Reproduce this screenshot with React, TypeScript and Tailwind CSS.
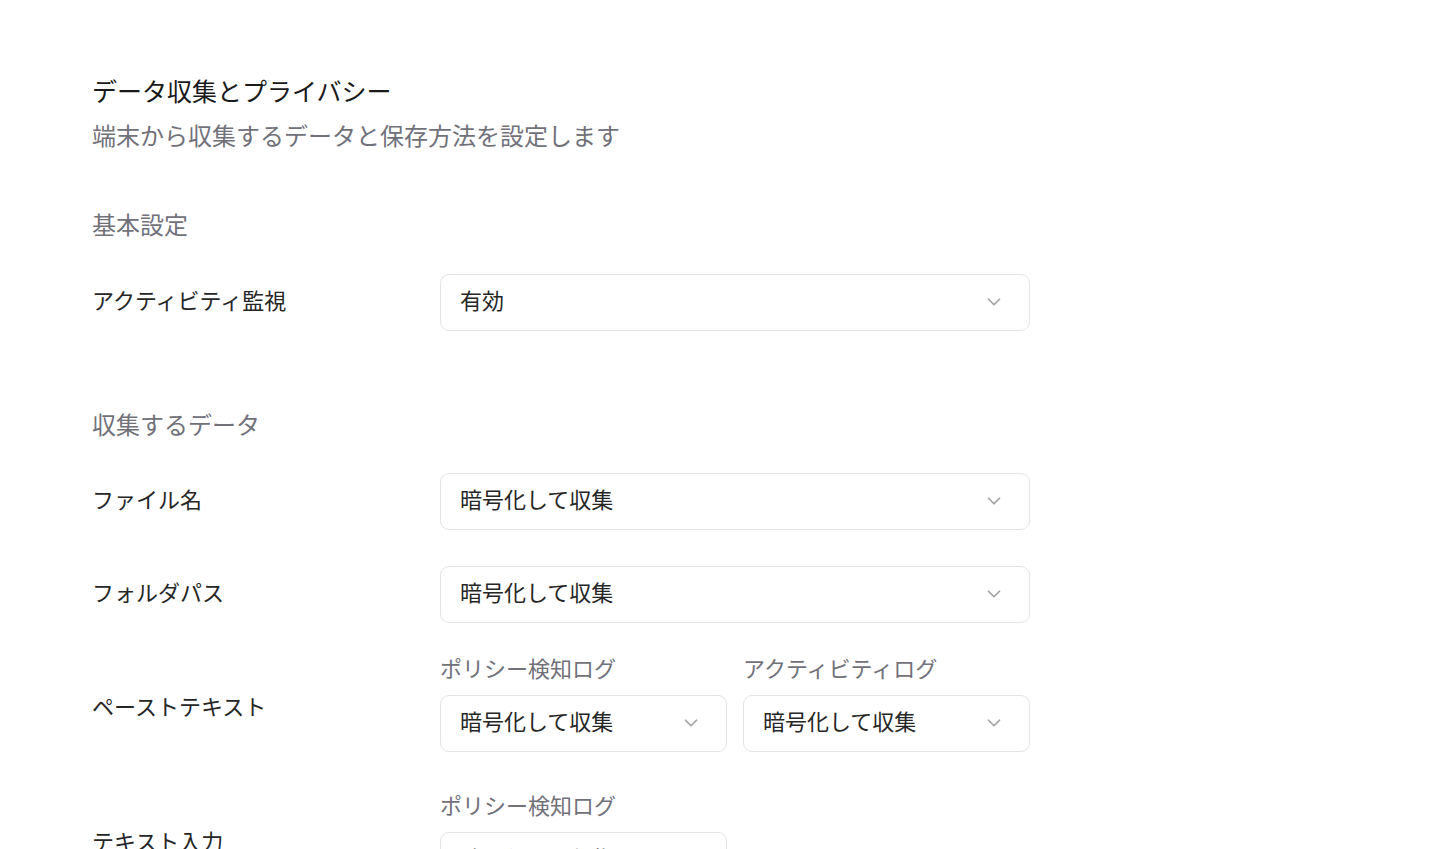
import { ChevronDown } from "lucide-react";

type SelectProps = {
  value: string;
  className?: string;
};

function Select({ value, className = "" }: SelectProps) {
  return (
    <div
      className={`flex h-[57px] items-center justify-between rounded-[9px] border border-[#e4e4e7] bg-white pl-[19px] pr-[24px] ${className}`}
    >
      <span className="mb-[7px] text-[22px] leading-none text-[#262626]">{value}</span>
      <ChevronDown size={22} strokeWidth={1.9} className="mb-[2px] text-[#a3a3a3]" />
    </div>
  );
}

function SubField({ label, value }: { label: string; value: string }) {
  return (
    <div className="flex w-[287px] flex-col">
      <span className="-mt-[2px] mb-[2px] text-[22px] leading-[30px] text-[#71717a]">{label}</span>
      <Select value={value} className="mt-[11px]" />
    </div>
  );
}

function Row({
  label,
  labelClassName = "mb-[8px]",
  children,
}: {
  label: string;
  labelClassName?: string;
  children: React.ReactNode;
}) {
  return (
    <div className="grid grid-cols-[348px_590px] items-center">
      <span className={`text-[22px] leading-[30px] text-[#262626] ${labelClassName}`}>{label}</span>
      {children}
    </div>
  );
}

export default function App() {
  return (
    <div
      className="min-h-[849px] w-full overflow-hidden bg-white pl-[92px] pt-[72px]"
      style={{ fontFamily: '"Noto Sans CJK JP", "Noto Sans", sans-serif' }}
    >
      <h1 className="text-[25px] leading-[36px] text-[#1a1a1a]">データ収集とプライバシー</h1>
      <p className="mt-[9px] text-[24px] leading-[36px] text-[#71717a]">
        端末から収集するデータと保存方法を設定します
      </p>

      <h2 className="mt-[53px] text-[24px] leading-[36px] text-[#71717a]">基本設定</h2>
      <div className="mt-[32px]">
        <Row label="アクティビティ監視">
          <Select value="有効" />
        </Row>
      </div>

      <h2 className="mt-[75px] text-[24px] leading-[36px] text-[#71717a]">収集するデータ</h2>
      <div className="mt-[31px] flex flex-col">
        <Row label="ファイル名">
          <Select value="暗号化して収集" />
        </Row>
        <div className="mt-[36px]">
          <Row label="フォルダパス">
            <Select value="暗号化して収集" />
          </Row>
        </div>
        <div className="mt-[31px]">
          <Row label="ペーストテキスト" labelClassName="mt-[3px]">
            <div className="flex gap-[16px]">
              <SubField label="ポリシー検知ログ" value="暗号化して収集" />
              <SubField label="アクティビティログ" value="暗号化して収集" />
            </div>
          </Row>
        </div>
        <div className="mt-[39px]">
          <Row label="テキスト入力" labelClassName="">
            <div className="flex gap-[16px]">
              <SubField label="ポリシー検知ログ" value="暗号化して収集" />
            </div>
          </Row>
        </div>
      </div>
    </div>
  );
}
